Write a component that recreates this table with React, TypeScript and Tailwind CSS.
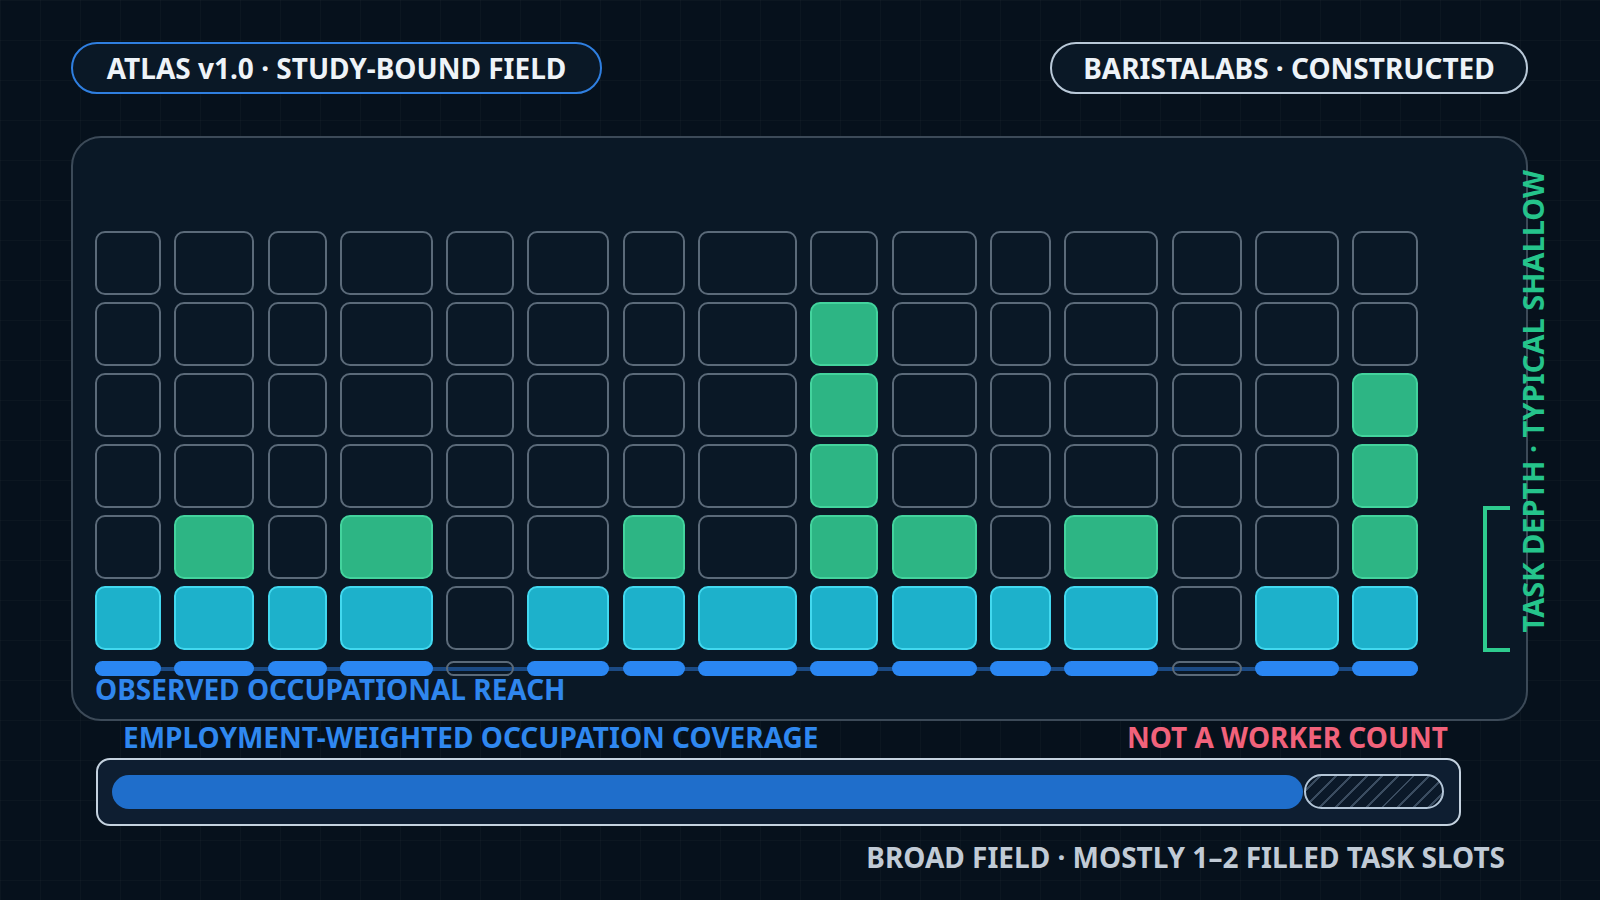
const COLS = [66, 80, 59, 93, 68, 82, 62, 99, 68, 85, 61, 94, 70, 84, 66];

// green = filled task slots above the base row, base = observed reach
const COLUMNS: { green: number; base: boolean }[] = [
  { green: 0, base: true },
  { green: 1, base: true },
  { green: 0, base: true },
  { green: 1, base: true },
  { green: 0, base: false },
  { green: 0, base: true },
  { green: 1, base: true },
  { green: 0, base: true },
  { green: 4, base: true },
  { green: 1, base: true },
  { green: 0, base: true },
  { green: 1, base: true },
  { green: 0, base: false },
  { green: 0, base: true },
  { green: 3, base: true },
];

const gridCols =
  "grid w-max grid-cols-[66px_80px_59px_93px_68px_82px_62px_99px_68px_85px_61px_94px_70px_84px_66px] gap-x-[13.3px]";

function Cell({ kind }: { kind: "empty" | "green" | "cyan" }) {
  if (kind === "green")
    return <div className="h-[64px] rounded-[10px] border-2 border-[#43d39d] bg-[#2db584]" />;
  if (kind === "cyan")
    return <div className="h-[64px] rounded-[10px] border-2 border-[#42d8ef] bg-[#1db1cb]" />;
  return <div className="h-[64px] rounded-[10px] border-2 border-[#5b6a79]" />;
}

function SlotGrid() {
  const rows = [0, 1, 2, 3, 4, 5];
  return (
    <div className="flex flex-col">
      <div className={`${gridCols} gap-y-[7px]`}>
        {rows.map((r) =>
          COLUMNS.map((c, i) => {
            let kind: "empty" | "green" | "cyan" = "empty";
            if (r === 5) kind = c.base ? "cyan" : "empty";
            else if (r >= 5 - c.green) kind = "green";
            return <Cell key={`${r}-${i}`} kind={kind} />;
          })
        )}
      </div>
      <div
        className={`${gridCols} mt-[11px] bg-[linear-gradient(#1b4a84,#1b4a84)] bg-[length:100%_4px] bg-center bg-no-repeat`}
      >
        {COLUMNS.map((c, i) =>
          c.base ? (
            <div key={i} className="h-[15px] rounded-full bg-[#2a86f2]" />
          ) : (
            <div key={i} className="h-[15px] rounded-full border-2 border-[#5b6a79]" />
          )
        )}
      </div>
      <p className="mt-[-1px] text-[28px] leading-none font-bold text-[#2f86ee]">
        OBSERVED OCCUPATIONAL REACH
      </p>
    </div>
  );
}

export default function App() {
  return (
    <div className="w-[1600px] h-[900px] overflow-hidden bg-[#06111c] bg-[linear-gradient(rgba(255,255,255,0.025)_1px,transparent_1px),linear-gradient(90deg,rgba(255,255,255,0.025)_1px,transparent_1px)] bg-[length:40px_40px] font-['Noto_Sans',sans-serif]">
      {/* header pills */}
      <div className="flex justify-between pt-[42px] pl-[71px] pr-[72px]">
        <div className="flex h-[52px] w-[531px] items-center justify-center rounded-full border-2 border-[#2f7fe0] bg-[#0a1826] text-[28px] leading-none font-bold text-[#eef3f8]">
          ATLAS v1.0 · STUDY-BOUND FIELD
        </div>
        <div className="flex h-[52px] w-[478px] items-center justify-center rounded-full border-2 border-[#b9c9d8] bg-[#0a1826] text-[28px] leading-none font-bold text-[#eef3f8]">
          BARISTALABS · CONSTRUCTED
        </div>
      </div>

      {/* main field */}
      <div className="relative mt-[42px] ml-[71px] h-[585px] w-[1457px] rounded-[30px] border-2 border-[#3c4a58] bg-[#0a1826] pt-[93px] pl-[22px]">
        <SlotGrid />
        <div className="absolute left-[1410px] top-[368px] h-[146px] w-[27px] border-y-4 border-l-4 border-[#2ecb8e]" />
        <p className="absolute left-[1445px] bottom-[86px] rotate-180 whitespace-nowrap text-[29px] leading-none font-bold text-[#25c48b] [writing-mode:vertical-rl]">
          TASK DEPTH · TYPICAL SHALLOW
        </p>
      </div>

      {/* coverage */}
      <div className="mt-[2px] ml-[123px] flex w-[1325px] justify-between text-[28px] leading-none font-bold">
        <span className="text-[#2f88f0]">EMPLOYMENT-WEIGHTED OCCUPATION COVERAGE</span>
        <span className="text-[#f1627b]">NOT A WORKER COUNT</span>
      </div>
      <div className="mt-[7px] ml-[96px] flex w-[1365px] items-center rounded-[14px] border-2 border-[#c4d2df] bg-[#0e1e31] pt-[14px] pr-[15px] pb-[15px] pl-[14px]">
        <div className="h-[34px] flex-1 rounded-full bg-[#1f6ecb]" />
        <div className="ml-[1px] h-[35px] w-[140px] rounded-full border-2 border-[#b4c6d8] bg-[#0b1929] bg-[repeating-linear-gradient(135deg,transparent_0_9px,#3a4c60_9px_11px)]" />
      </div>
      <div className="mt-[17px] flex justify-end pr-[95px]">
        <span className="text-[28px] leading-none font-bold text-[#c1cbd6]">
          BROAD FIELD · MOSTLY 1–2 FILLED TASK SLOTS
        </span>
      </div>
    </div>
  );
}
